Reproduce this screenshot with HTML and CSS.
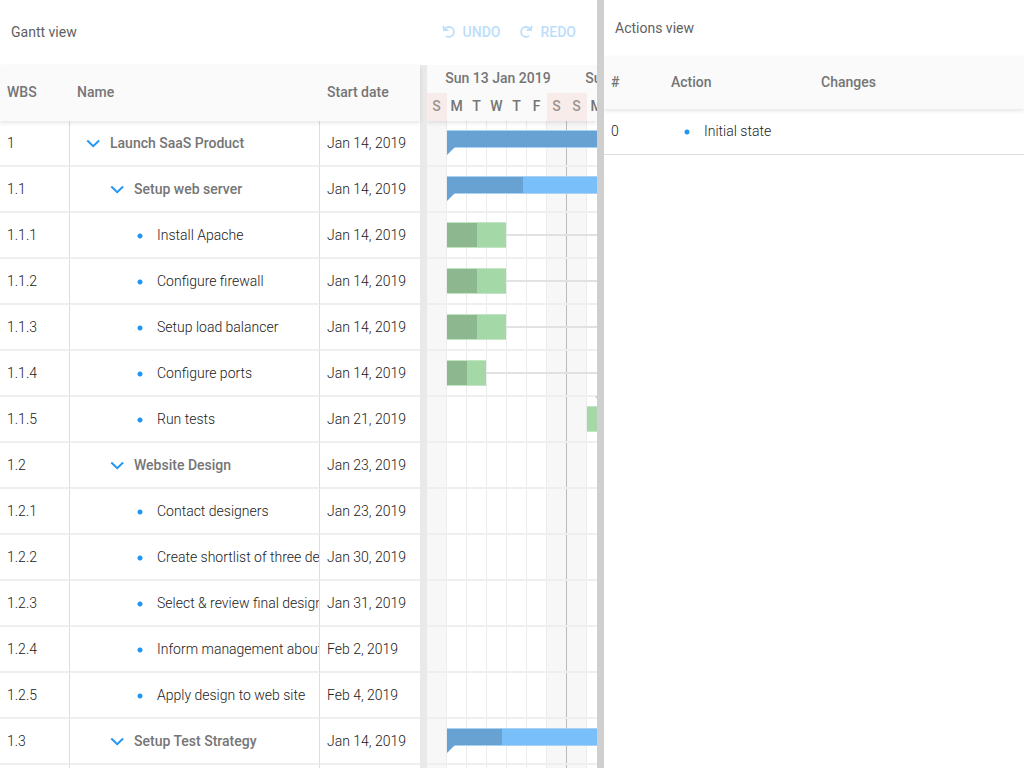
FILE: index.html
```html
<!DOCTYPE html>
<html lang="en">
<head>
<meta charset="utf-8">
<title>Gantt undo / redo</title>
<link rel="stylesheet" href="styles.css">
</head>
<body>
<svg class="sprite" aria-hidden="true">
  <symbol id="undo" viewBox="0 0 14 14"><path d="M1.300 0.800L2 5.200l4.400-.4M2.200 4.600C3.400 2.800 5 1.900 7.200 1.900a5 5 0 1 1-3.300 8.900" fill="none" stroke="currentColor" stroke-width="1.700"/></symbol>
  <symbol id="redo" viewBox="0 0 14 14"><path d="M12.700 0.800L12 5.200l-4.400-.4M11.800 4.600C10.600 2.800 9 1.900 6.800 1.900a5 5 0 1 0 3.300 8.900" fill="none" stroke="currentColor" stroke-width="1.700"/></symbol>
  <symbol id="chevron" viewBox="0 0 14 14"><path d="M1.300 4.600l5.900 5.600 5.900-5.600" fill="none" stroke="currentColor" stroke-width="2"/></symbol>
</svg>
<main class="app">
  <section class="gantt-pane">
    <header class="toolbar">
      <h1 class="title">Gantt view</h1>
      <div class="tools">
        <button class="tool" type="button" disabled><svg class="tool-icon"><use href="#undo"/></svg>UNDO</button>
        <button class="tool" type="button" disabled><svg class="tool-icon"><use href="#redo"/></svg>REDO</button>
      </div>
    </header>
    <div class="gantt">
      <table class="grid">
        <colgroup><col class="col-wbs"><col class="col-name"><col class="col-date"></colgroup>
        <thead><tr><th>WBS</th><th>Name</th><th>Start date</th></tr></thead>
        <tbody>
          <tr><td>1</td><td><div class="name level-1 parent"><button class="toggle" type="button" aria-label="Collapse"><svg><use href="#chevron"/></svg></button>Launch SaaS Product</div></td><td>Jan 14, 2019</td></tr>
          <tr><td>1.1</td><td><div class="name level-2 parent"><button class="toggle" type="button" aria-label="Collapse"><svg><use href="#chevron"/></svg></button>Setup web server</div></td><td>Jan 14, 2019</td></tr>
          <tr><td>1.1.1</td><td><div class="name level-3"><i class="dot"></i>Install Apache</div></td><td>Jan 14, 2019</td></tr>
          <tr><td>1.1.2</td><td><div class="name level-3"><i class="dot"></i>Configure firewall</div></td><td>Jan 14, 2019</td></tr>
          <tr><td>1.1.3</td><td><div class="name level-3"><i class="dot"></i>Setup load balancer</div></td><td>Jan 14, 2019</td></tr>
          <tr><td>1.1.4</td><td><div class="name level-3"><i class="dot"></i>Configure ports</div></td><td>Jan 14, 2019</td></tr>
          <tr><td>1.1.5</td><td><div class="name level-3"><i class="dot"></i>Run tests</div></td><td>Jan 21, 2019</td></tr>
          <tr><td>1.2</td><td><div class="name level-2 parent"><button class="toggle" type="button" aria-label="Collapse"><svg><use href="#chevron"/></svg></button>Website Design</div></td><td>Jan 23, 2019</td></tr>
          <tr><td>1.2.1</td><td><div class="name level-3"><i class="dot"></i>Contact designers</div></td><td>Jan 23, 2019</td></tr>
          <tr><td>1.2.2</td><td><div class="name level-3"><i class="dot"></i>Create shortlist of three designers</div></td><td>Jan 30, 2019</td></tr>
          <tr><td>1.2.3</td><td><div class="name level-3"><i class="dot"></i>Select &amp; review final design</div></td><td>Jan 31, 2019</td></tr>
          <tr><td>1.2.4</td><td><div class="name level-3"><i class="dot"></i>Inform management about decision</div></td><td>Feb 2, 2019</td></tr>
          <tr><td>1.2.5</td><td><div class="name level-3"><i class="dot"></i>Apply design to web site</div></td><td>Feb 4, 2019</td></tr>
          <tr><td>1.3</td><td><div class="name level-2 parent"><button class="toggle" type="button" aria-label="Collapse"><svg><use href="#chevron"/></svg></button>Setup Test Strategy</div></td><td>Jan 14, 2019</td></tr>
          <tr><td></td><td></td><td></td></tr>
        </tbody>
      </table>
      <div class="grid-splitter"></div>
      <div class="timeline">
        <div class="time-header">
          <div class="weeks"><span>Sun 13 Jan 2019</span><span>Sun 20 Jan 2019</span></div>
          <div class="days"><span class="off">S</span><span>M</span><span>T</span><span>W</span><span>T</span><span>F</span><span class="off">S</span><span class="off">S</span><span>M</span></div>
        </div>
        <div class="lanes">
          <div class="lane"><div class="bar summary" style="left:20px;width:400px"><div class="done" style="width:300px"></div></div></div>
          <div class="lane"><div class="bar summary" style="left:20px;width:200px"><div class="done" style="width:76px"></div></div></div>
          <div class="lane"><div class="link" style="left:79px"></div><div class="bar task" style="left:20px;width:59px"><div class="done" style="width:30px"></div></div></div>
          <div class="lane"><div class="link" style="left:79px"></div><div class="bar task" style="left:20px;width:59px"><div class="done" style="width:30px"></div></div></div>
          <div class="lane"><div class="link" style="left:79px"></div><div class="bar task" style="left:20px;width:59px"><div class="done" style="width:30px"></div></div></div>
          <div class="lane"><div class="link" style="left:59px"></div><div class="bar task" style="left:20px;width:39px"><div class="done" style="width:20px"></div></div></div>
          <div class="lane"><div class="arrow" style="left:168px"></div><div class="bar task" style="left:160px;width:40px"></div></div>
          <div class="lane"></div>
          <div class="lane"></div>
          <div class="lane"></div>
          <div class="lane"></div>
          <div class="lane"></div>
          <div class="lane"></div>
          <div class="lane"><div class="bar summary" style="left:20px;width:200px"><div class="done" style="width:55px"></div></div></div>
          <div class="lane"></div>
        </div>
      </div>
    </div>
  </section>
  <div class="splitter"></div>
  <section class="actions-pane">
    <header class="toolbar compact"><h2 class="title">Actions view</h2></header>
    <table class="actions">
      <colgroup><col class="col-num"><col class="col-action"><col></colgroup>
      <thead><tr><th>#</th><th>Action</th><th>Changes</th></tr></thead>
      <tbody><tr><td>0</td><td><div class="name level-0"><i class="dot"></i>Initial state</div></td><td></td></tr></tbody>
    </table>
  </section>
</main>
</body>
</html>
```
FILE: styles.css
```css
* { box-sizing: border-box; }

body {
  margin: 0;
  font: 300 14px/20px Roboto, "Liberation Sans", sans-serif;
  color: #212121;
  background: #fff;
}

.sprite { display: none; }

.app {
  display: flex;
  height: 100vh;
  overflow: hidden;
}

.gantt-pane {
  flex: 597 1 0;
  min-width: 0;
  display: flex;
  flex-direction: column;
  overflow: hidden;
}

.actions-pane {
  flex: 420 1 0;
  min-width: 0;
  overflow: hidden;
}

.splitter { flex: none; width: 7px; background: #cfcfcf; }

.toolbar {
  flex: none;
  display: flex;
  align-items: center;
  justify-content: space-between;
  height: 65px;
  padding: 0 21px 1px 11px;
}

.toolbar.compact { height: 56px; padding-bottom: 0; }

.title {
  margin: 0;
  font-size: 14px;
  font-weight: 400;
  color: #616161;
}

.tools { display: flex; gap: 19px; }

.tool {
  display: flex;
  align-items: center;
  gap: 7px;
  padding: 0;
  border: 0;
  background: none;
  font: 500 14px/20px Roboto, sans-serif;
  color: #bbdefb;
}

.tool-icon { width: 14px; height: 14px; }

.gantt { display: flex; flex: 1; min-height: 0; }

/* Tables */
table {
  table-layout: fixed;
  border-collapse: separate;
  border-spacing: 0;
}

.grid { flex: none; width: 420px; align-self: flex-start; }
.actions { width: 100%; }
.col-wbs { width: 70px; }
.col-name { width: 250px; }
.col-date { width: 100px; }
.col-num { width: 60px; }
.col-action { width: 150px; }

thead {
  position: relative;
  z-index: 1;
  box-shadow: 0 2px 4px rgba(0, 0, 0, .1);
}

th {
  height: 56px;
  padding: 0 7px 2px;
  background: #fafafa;
  text-align: left;
  font-weight: 500;
  color: #757575;
}

.actions th { height: 53px; }

td {
  height: 46px;
  padding: 0 0 0 7px;
  overflow: hidden;
  white-space: nowrap;
  border-bottom: 2px solid #efefef;
}

.grid td:not(:last-child) { border-right: 1px solid #ddd; }
.actions td { padding-bottom: 2px; border-bottom: 1px solid #ddd; }

.name { display: flex; align-items: center; }
.parent { font-weight: 500; color: #757575; }
.level-0 { padding-left: 9px; }
.level-1 { padding-left: 9px; }
.level-2 { padding-left: 33px; }
.level-3 { padding-left: 56px; }

.toggle {
  flex: none;
  width: 14px;
  height: 14px;
  margin-right: 10px;
  padding: 0;
  border: 0;
  background: none;
  color: #2196f3;
}

.toggle svg { display: block; width: 14px; height: 14px; }

.dot {
  flex: none;
  width: 14px;
  height: 14px;
  margin-right: 10px;
  background: radial-gradient(circle at 7px 8px, #2196f3 2px, transparent 3px);
}

/* Timeline */
.grid-splitter { flex: none; width: 7px; background: #e9e9e9; }

.timeline { flex: 1; min-width: 0; overflow: hidden; }

.time-header {
  position: relative;
  z-index: 1;
  height: 56px;
  background: #fafafa;
  box-shadow: 0 2px 4px rgba(0, 0, 0, .1);
  font-weight: 500;
  color: #757575;
}

.weeks, .days { display: flex; height: 28px; line-height: 26px; text-align: center; }
.weeks span { flex: none; width: 140px; padding-left: 2px; }
.days span { flex: none; width: 20px; padding-right: 1px; }
.days .off { background: #f8ecea; color: #9d9391; }

.lanes {
  background:
    linear-gradient(#bbb, #bbb) 139px 0 / 1px 100% no-repeat,
    repeating-linear-gradient(to right, transparent 0 19px, #ececec 19px 20px),
    linear-gradient(#f7f7f7, #f7f7f7) 0 0 / 20px 100% no-repeat,
    linear-gradient(#f7f7f7, #f7f7f7) 120px 0 / 40px 100% no-repeat;
}

.lane { position: relative; height: 46px; border-bottom: 2px solid #efefef; }

.bar { position: absolute; top: 9px; }
.done { height: 100%; }

.summary { height: 18px; background: #79bff9; border-block: 1px solid #a9d2f2; }
.summary .done { background: #67a2d3; }

.summary::after {
  content: "";
  position: absolute;
  top: 16px;
  left: 0;
  width: 8px;
  height: 8px;
  background: #67a2d3;
  clip-path: polygon(0 0, 100% 0, 0 100%);
}

.task { height: 26px; background: #a5d8a7; border-block: 1px solid #c3e5c4; }
.task .done { background: #8db78f; }

.link { position: absolute; top: 21px; right: 0; height: 2px; background: #e2e2e2; }

.arrow {
  position: absolute;
  top: -1px;
  border: 4px solid transparent;
  border-top: 6px solid #ccc;
  border-bottom: 0;
}
```
